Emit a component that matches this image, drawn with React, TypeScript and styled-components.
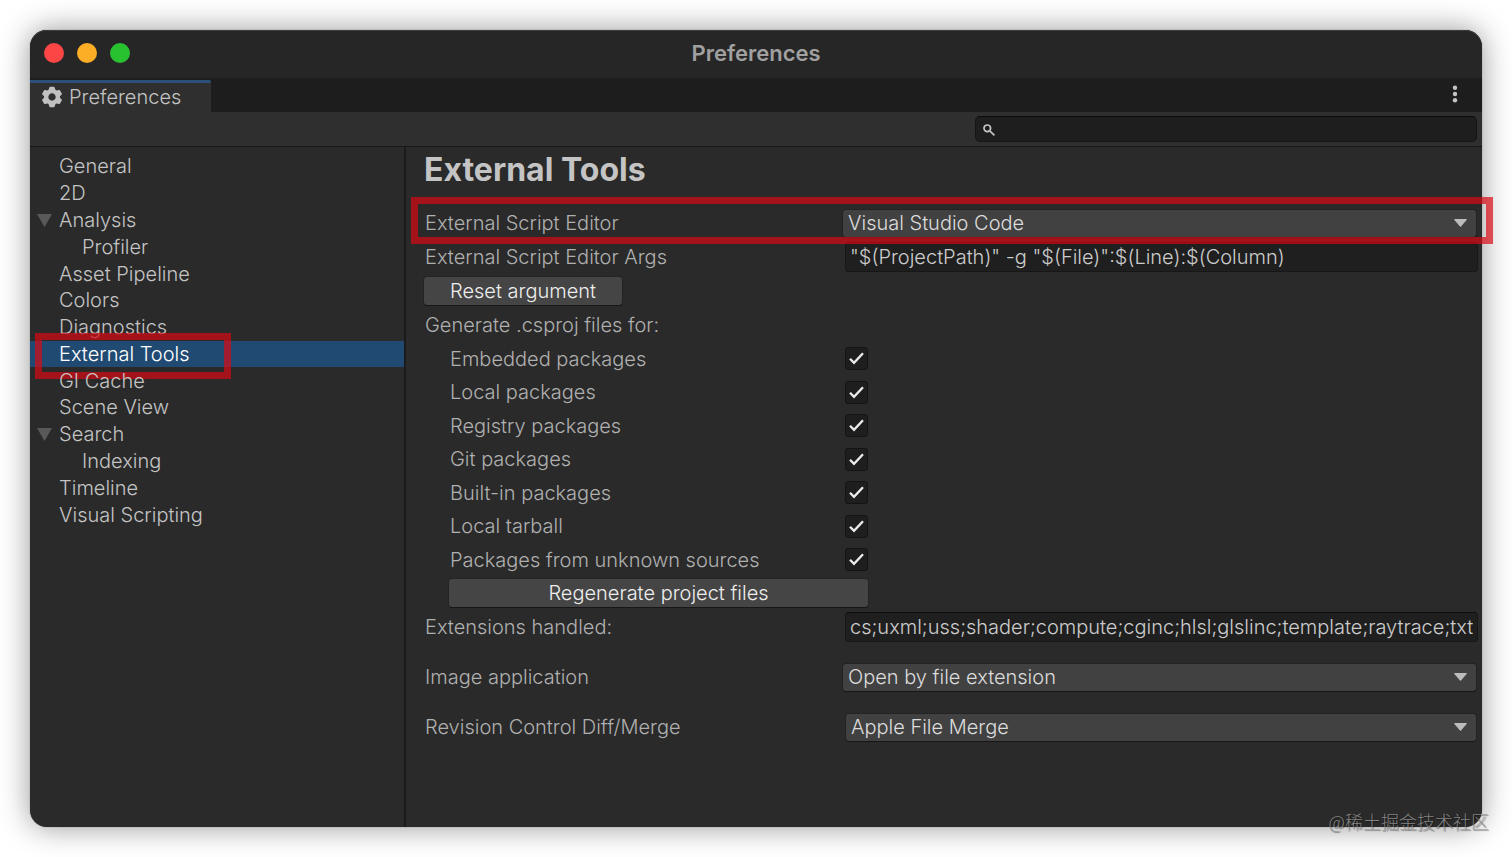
import React from "react";
import styled, { createGlobalStyle } from "styled-components";

const GlobalStyle = createGlobalStyle`
  * { box-sizing: border-box; }
  body { margin: 0; background: #fff; }
  body, button, input, select {
    font-family: Inter, "Noto Sans CJK SC", sans-serif;
    font-size: 20px;
    font-weight: 350;
    line-height: 26px;
  }
`;

const Desktop = styled.div`
  position: relative;
  display: flex;
  min-height: 100vh;
  padding: 30px;
`;

const Window = styled.main`
  flex: 1;
  min-width: 0;
  display: flex;
  flex-direction: column;
  border-radius: 17px;
  background: #2a2a2a;
  box-shadow: 0 0 1px #555, 0 0 30px rgba(0, 0, 0, 0.42);
`;

const TitleBar = styled.header`
  display: grid;
  grid-template-columns: 1fr auto 1fr;
  align-items: center;
  height: 48px;
  padding: 0 14px 2px;
  border-radius: 17px 17px 0 0;
  background: #262626;
  box-shadow: inset 0 1px 0 #3c3c3c;
`;

const Lights = styled.div`
  display: flex;
  gap: 13px;
`;

const Light = styled.button<{ $color: string }>`
  width: 20px;
  height: 20px;
  padding: 0;
  border: 0;
  border-radius: 50%;
  background: ${(p) => p.$color};
`;

const WindowTitle = styled.h1`
  margin: 0;
  font-size: 22px;
  line-height: 26px;
  font-weight: 600;
  color: #a0a0a0;
`;

const TabStrip = styled.div`
  display: flex;
  justify-content: space-between;
  height: 34px;
  padding-top: 2px;
  background: #1d1d1d;
`;

const Tab = styled.button`
  display: flex;
  align-items: center;
  gap: 6px;
  width: 181px;
  padding: 0 11px 1px;
  border: 0;
  border-top: 3px solid #2b5079;
  border-radius: 0 2px 0 0;
  background: #2f2f2f;
  color: #c4c4c4;
`;

const MenuButton = styled.button`
  display: flex;
  align-items: center;
  justify-content: center;
  width: 54px;
  padding: 0 0 4px;
  border: 0;
  background: none;
`;

const Toolbar = styled.div`
  display: flex;
  justify-content: flex-end;
  height: 35px;
  padding: 4px 5px;
  border-bottom: 1px solid #171717;
  background: #2f2f2f;
`;

const SearchBox = styled.label`
  display: flex;
  align-items: center;
  gap: 6px;
  flex-basis: 502px;
  height: 26px;
  padding: 1px 7px 0;
  border: 1px solid #161616;
  border-top-color: #0b0b0b;
  border-radius: 5px;
  background: #1e1e1e;
`;

const SearchInput = styled.input`
  flex: 1;
  min-width: 0;
  height: 20px;
  padding: 0;
  border: 0;
  outline: 0;
  background: none;
  color: #c8c8c8;
`;

const Body = styled.div`
  flex: 1;
  display: flex;
`;

const Sidebar = styled.nav`
  width: 376px;
  flex: none;
  padding-top: 6px;
  border-right: 2px solid #1b1b1b;
`;

const TreeList = styled.ul`
  display: grid;
  grid-auto-rows: 1fr;
  min-height: 375px;
  margin: 0;
  padding: 0;
  list-style: none;
`;

const TreeItem = styled.li`
  position: relative;
  display: flex;
`;

const TreeLink = styled.a<{ $nested?: boolean; $selected?: boolean }>`
  flex: 1;
  display: flex;
  align-items: center;
  padding-left: ${(p) => (p.$nested ? 52 : 7)}px;
  background: ${(p) => (p.$selected ? "#214a73" : "none")};
  color: ${(p) => (p.$selected ? "#fff" : "#c4c4c4")};
  text-decoration: none;
`;

const FoldSlot = styled.span`
  display: flex;
  width: 22px;
`;

const Outline = styled.span`
  position: absolute;
  border: 7px solid rgba(217, 10, 18, 0.7);
  pointer-events: none;
`;

const ItemOutline = styled(Outline)`
  left: 5px;
  top: -8px;
  bottom: -12px;
  width: 196px;
`;

const RowOutline = styled(Outline)`
  left: -13px;
  right: -15px;
  top: -9px;
  bottom: -4px;
  z-index: 1;
`;

const Panel = styled.section`
  flex: 1;
  min-width: 0;
  padding: 0 4px 0 18px;
`;

const Heading = styled.h2`
  margin: 0;
  padding: 2px 0 15px;
  font-size: 32px;
  line-height: 42px;
  font-weight: 700;
  color: #c4c4c4;
`;

const Row = styled.div<{ $tall?: boolean }>`
  position: relative;
  display: grid;
  grid-template-columns: 421px 1fr;
  align-items: center;
  height: 34px;
  margin-bottom: ${(p) => (p.$tall ? 16 : 0)}px;
`;

const Label = styled.label`
  padding-left: 1px;
  color: #b0b0b0;
`;

const GroupLabel = styled.div`
  padding: 4px 1px;
  color: #b0b0b0;
`;

const PackageGroup = styled.div`
  display: grid;
  grid-auto-rows: 1fr;
  min-height: 268px;
  padding-left: 25px;
`;

const PackageRow = styled.div`
  display: grid;
  grid-template-columns: 396px 1fr;
  align-items: center;
`;

const TextField = styled.input`
  width: 100%;
  height: 30px;
  padding: 0 4px;
  border: 1px solid #171717;
  border-top-color: #0d0d0d;
  border-radius: 4px;
  outline: 0;
  background: #1f1f1f;
  color: #cccccc;
`;

const SelectBox = styled.div<{ $inset?: boolean }>`
  display: grid;
  align-items: center;
  margin: 0 2px 0 ${(p) => (p.$inset ? 1 : -2)}px;

  > * {
    grid-area: 1 / 1;
  }

  > svg {
    justify-self: end;
    margin-right: 9px;
    pointer-events: none;
  }
`;

const Select = styled.select`
  appearance: none;
  width: 100%;
  height: 27px;
  padding: 0 32px 1px 5px;
  border: 0;
  border-radius: 3px;
  outline: 0;
  background: #414141;
  box-shadow: 0 1px 0 #171717, 0 0 0 1px #232323;
  color: #dcdcdc;
`;

const PushButton = styled.button<{ $width: number }>`
  width: ${(p) => p.$width}px;
  height: 28px;
  padding: 0;
  border: 0;
  border-radius: 3px;
  background: #454545;
  box-shadow: 0 1px 0 #171717, 0 0 0 1px #242424;
  color: #eeeeee;
`;

const CheckBox = styled.span`
  display: grid;
  place-items: center;
  width: 23px;
  height: 23px;

  > * {
    grid-area: 1 / 1;
  }

  > svg {
    pointer-events: none;
  }

  > input:not(:checked) + svg {
    visibility: hidden;
  }
`;

const Tick = styled.input`
  appearance: none;
  width: 23px;
  height: 23px;
  margin: 0;
  border: 1px solid #141414;
  border-radius: 3px;
  background: #1e1e1e;
`;

const Watermark = styled.div`
  position: absolute;
  right: 23px;
  bottom: 22px;
  color: rgba(150, 150, 150, 0.85);
  text-shadow: 1px 1px 1px rgba(0, 0, 0, 0.4);
  font-family: "Noto Sans CJK SC", sans-serif;
  font-size: 18px;
  font-weight: 300;
  line-height: 28px;
`;

const GearIcon = () => (
  <svg width="22" height="22" viewBox="-11 -11 22 22" fill="#c0c0c0" aria-hidden="true">
    <circle r="5.8" fill="none" stroke="#c0c0c0" strokeWidth="4.2" />
    {[0, 60, 120, 180, 240, 300].map((a) => (
      <path key={a} transform={`rotate(${a})`} d="M-3.8 -6L-2.6 -9.6Q-2.5 -10.2 -1.9 -10.2H1.9Q2.5 -10.2 2.6 -9.6L3.8 -6Z" />
    ))}
  </svg>
);

const DotsIcon = () => (
  <svg width="6" height="18" viewBox="0 0 6 18" fill="#c4c4c4" aria-hidden="true">
    <circle cx="3" cy="2.8" r="2.2" />
    <circle cx="3" cy="9" r="2.2" />
    <circle cx="3" cy="15.2" r="2.2" />
  </svg>
);

const SearchIcon = () => (
  <svg width="12" height="12" viewBox="0 0 12 12" fill="none" stroke="#c4c4c4" strokeWidth="1.7" aria-hidden="true">
    <circle cx="4.3" cy="4.3" r="3.3" />
    <path d="M6.8 6.8L11.4 11.4" />
  </svg>
);

const FoldIcon = () => (
  <svg width="15" height="14" viewBox="0 0 15 14" aria-hidden="true">
    <path d="M0 1H15L7.5 14Z" fill="#595959" />
  </svg>
);

const ArrowIcon = () => (
  <svg width="13" height="8" viewBox="0 0 13 8" aria-hidden="true">
    <path d="M0.6 0H12.4Q13 0.3 12.6 1L7 7.6Q6.5 8 6 7.6L0.4 1Q0 0.3 0.6 0Z" fill="#bcbcbc" />
  </svg>
);

const CheckIcon = () => (
  <svg width="15" height="13" viewBox="0 0 15 13" fill="none" stroke="#ececec" strokeWidth="2.3" aria-hidden="true">
    <path d="M1 6.8L5 10.8L14 1.2" />
  </svg>
);

type Entry = { name: string; nested?: boolean; fold?: boolean; selected?: boolean };

const entries: Entry[] = [
  { name: "General" },
  { name: "2D" },
  { name: "Analysis", fold: true },
  { name: "Profiler", nested: true },
  { name: "Asset Pipeline" },
  { name: "Colors" },
  { name: "Diagnostics" },
  { name: "External Tools", selected: true },
  { name: "GI Cache" },
  { name: "Scene View" },
  { name: "Search", fold: true },
  { name: "Indexing", nested: true },
  { name: "Timeline" },
  { name: "Visual Scripting" },
];

const packages = [
  "Embedded packages",
  "Local packages",
  "Registry packages",
  "Git packages",
  "Built-in packages",
  "Local tarball",
  "Packages from unknown sources",
];

type DropdownProps = { id: string; value: string; inset?: boolean };

const Dropdown = ({ id, value, inset }: DropdownProps) => (
  <SelectBox $inset={inset}>
    <Select id={id}>
      <option>{value}</option>
    </Select>
    <ArrowIcon />
  </SelectBox>
);

export default function App() {
  return (
    <>
      <GlobalStyle />
      <Desktop>
        <Window>
          <TitleBar>
            <Lights>
              <Light $color="#fc4645" aria-label="Close" />
              <Light $color="#fdae27" aria-label="Minimize" />
              <Light $color="#28c231" aria-label="Zoom" />
            </Lights>
            <WindowTitle>Preferences</WindowTitle>
          </TitleBar>
          <TabStrip>
            <Tab>
              <GearIcon />
              Preferences
            </Tab>
            <MenuButton aria-label="Menu">
              <DotsIcon />
            </MenuButton>
          </TabStrip>
          <Toolbar>
            <SearchBox>
              <SearchIcon />
              <SearchInput type="text" aria-label="Search" />
            </SearchBox>
          </Toolbar>
          <Body>
            <Sidebar>
              <TreeList>
                {entries.map((e) => (
                  <TreeItem key={e.name}>
                    <TreeLink href="#" $nested={e.nested} $selected={e.selected}>
                      {!e.nested && <FoldSlot>{e.fold && <FoldIcon />}</FoldSlot>}
                      {e.name}
                    </TreeLink>
                    {e.selected && <ItemOutline />}
                  </TreeItem>
                ))}
              </TreeList>
            </Sidebar>
            <Panel>
              <Heading>External Tools</Heading>
              <Row>
                <Label htmlFor="editor">External Script Editor</Label>
                <Dropdown id="editor" value="Visual Studio Code" />
                <RowOutline />
              </Row>
              <Row>
                <Label htmlFor="args">External Script Editor Args</Label>
                <TextField id="args" defaultValue={'"$(ProjectPath)" -g "$(File)":$(Line):$(Column)'} />
              </Row>
              <Row>
                <PushButton $width={198}>Reset argument</PushButton>
              </Row>
              <GroupLabel>Generate .csproj files for:</GroupLabel>
              <PackageGroup>
                {packages.map((name, i) => (
                  <PackageRow key={name}>
                    <Label htmlFor={`package-${i}`}>{name}</Label>
                    <CheckBox>
                      <Tick id={`package-${i}`} type="checkbox" defaultChecked />
                      <CheckIcon />
                    </CheckBox>
                  </PackageRow>
                ))}
                <PackageRow>
                  <PushButton $width={419}>Regenerate project files</PushButton>
                </PackageRow>
              </PackageGroup>
              <Row $tall>
                <Label htmlFor="extensions">Extensions handled:</Label>
                <TextField
                  id="extensions"
                  defaultValue="cs;uxml;uss;shader;compute;cginc;hlsl;glslinc;template;raytrace;txt"
                />
              </Row>
              <Row $tall>
                <Label htmlFor="image">Image application</Label>
                <Dropdown id="image" value="Open by file extension" />
              </Row>
              <Row $tall>
                <Label htmlFor="diff">Revision Control Diff/Merge</Label>
                <Dropdown id="diff" value="Apple File Merge" inset />
              </Row>
            </Panel>
          </Body>
        </Window>
        <Watermark>@稀土掘金技术社区</Watermark>
      </Desktop>
    </>
  );
}
